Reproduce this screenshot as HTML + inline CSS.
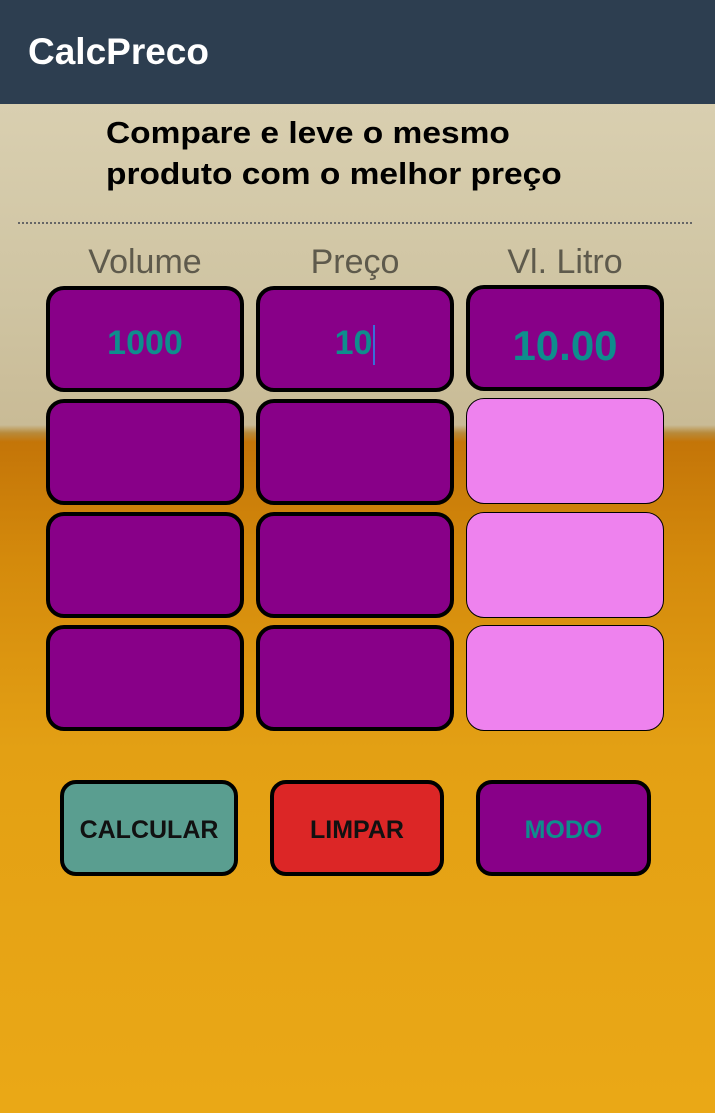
<!DOCTYPE html><html><head><style>
body{margin:0;width:715px;height:1113px;position:relative;overflow:hidden;font-family:"Liberation Sans",sans-serif;
background:linear-gradient(180deg,#d9cfb0 104px,#cfc4a2 300px,#c9bb96 425px,#b88a3a 433px,#c47508 442px,#d48a0c 560px,#e3a014 750px,#eaa816 1113px);}
.hdr{position:absolute;left:0;top:0;width:715px;height:104px;background:#2d3e50;color:#fff;font-size:37px;font-weight:bold;line-height:104px;padding-left:28px;box-sizing:border-box}
.t{position:absolute;left:106px;top:112px;font-size:31px;font-weight:bold;line-height:41px;color:#000;white-space:nowrap;transform:scaleX(1.08);transform-origin:left}
.dot{position:absolute;left:18px;top:222px;width:674px;border-top:2px dotted #666}
.lb{position:absolute;top:243px;font-size:34px;color:#5e5a4c;width:198px;text-align:center}
.b{position:absolute;box-sizing:border-box;width:198px;height:106px;background:#880088;border:4px solid #000;border-radius:18px;color:#0e8d8d;font-weight:bold;text-align:center;line-height:106px;font-size:34px}
.p{background:#ee82ee;border:1.5px solid #000}
.btn{position:absolute;top:780px;height:96px;box-sizing:border-box;border:4px solid #000;border-radius:16px;font-weight:bold;font-size:25px;text-align:center;line-height:92px}
</style></head><body>
<div class="hdr">CalcPreco</div>
<div class="t">Compare e leve o mesmo<br>produto com o melhor preço</div>
<div class="dot"></div>
<div class="lb" style="left:46px">Volume</div>
<div class="lb" style="left:256px">Preço</div>
<div class="lb" style="left:466px">Vl. Litro</div>
<div class="b" style="left:46px;top:286px">1000</div>
<div class="b" style="left:256px;top:286px">10<span style="display:inline-block;width:2px;height:40px;background:#3a6fd8;vertical-align:middle;margin-left:1px"></span></div>
<div class="b" style="left:466px;top:285px;font-size:42px;line-height:114px">10.00</div>
<div class="b" style="left:46px;top:399px"></div><div class="b" style="left:256px;top:399px"></div><div class="b p" style="left:466px;top:398px"></div>
<div class="b" style="left:46px;top:512px"></div><div class="b" style="left:256px;top:512px"></div><div class="b p" style="left:466px;top:512px"></div>
<div class="b" style="left:46px;top:625px"></div><div class="b" style="left:256px;top:625px"></div><div class="b p" style="left:466px;top:625px"></div>
<div class="btn" style="left:60px;width:178px;background:#5a9e90;color:#111">CALCULAR</div>
<div class="btn" style="left:270px;width:174px;background:#dc2626;color:#111">LIMPAR</div>
<div class="btn" style="left:476px;width:175px;background:#880088;color:#0e8d8d">MODO</div>
</body></html>
